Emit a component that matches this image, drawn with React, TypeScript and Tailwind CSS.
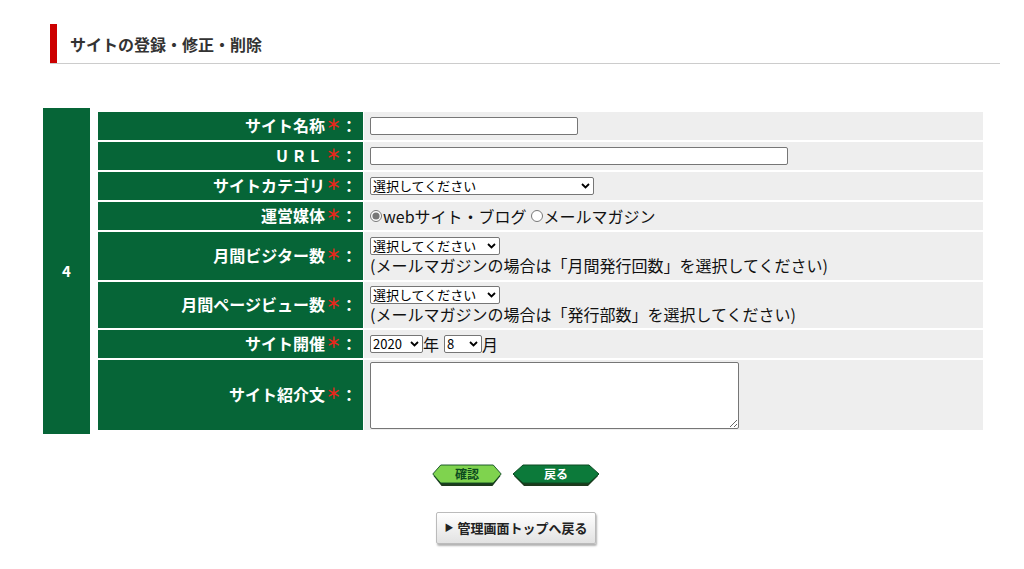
const jp = '[font-family:"Noto_Sans_CJK_JP","Noto_Sans",sans-serif]';

function Label({ children, wide }: { children: React.ReactNode; wide?: boolean }) {
    return (
        <div
            className={`flex w-[265px] shrink-0 items-center justify-end bg-[#066537] pb-[3px] pr-[6px] text-[16px] font-bold text-white ${wide ? 'tracking-[0.35em]' : ''}`}
        >
            {children}
            <span className="ml-[1px] text-[15px] tracking-normal text-[#e8261c]">＊</span>
            <span className="tracking-normal">：</span>
        </div>
    );
}

function Row({ label, children, h, wide }: { label: string; children: React.ReactNode; h: string; wide?: boolean }) {
    return (
        <div className={`flex gap-[1px] ${h}`}>
            <Label wide={wide}>{label}</Label>
            <div className="flex flex-1 flex-col justify-center bg-[#eeeeee] pl-[6px] text-[16px] leading-[20px] text-[#111]">
                {children}
            </div>
        </div>
    );
}

function Sel({ w, children }: { w: string; children: React.ReactNode }) {
    return (
        <span className={`relative inline-flex ${w}`}>
            <select
                className="h-[18px] w-full appearance-none rounded-[2px] border border-[#767676] bg-white py-0 pl-[2px] pr-[14px] text-[13px] leading-[16px] text-black"
                defaultValue=""
            >
                {children}
            </select>
            <svg
                className="pointer-events-none absolute right-[4px] top-[6px] h-[6px] w-[9px]"
                viewBox="0 0 9 6"
            >
                <path d="M1 1l3.5 3.5L8 1" fill="none" stroke="#000" strokeWidth="1.8" />
            </svg>
        </span>
    );
}

function HexButton({ text, fill, textColor, w }: { text: string; fill: string; textColor: string; w: string }) {
    return (
        <div className={`relative flex h-[22px] items-center justify-center ${w}`}>
            <svg className="absolute inset-0 h-full w-full" viewBox="0 0 88 22" preserveAspectRatio="none">
                <polygon points="2,12 12,2 76,2 86,12 76,22 12,22" fill="#1d3a1d" />
                <polygon points="1,10 11,1 77,1 87,10 77,19 11,19" fill={fill} stroke="#0d4a22" strokeWidth="1" />
            </svg>
            <span className="relative -mt-[2px] text-[12px] font-bold" style={{ color: textColor }}>
                {text}
            </span>
        </div>
    );
}

export default function App() {
    return (
        <div className={`min-h-[569px] w-[1024px] bg-white ${jp}`}>
            <div className="ml-[50px] mr-[24px] pt-[24px]">
                <div className="flex h-[40px] items-center border-b border-[#cccccc]">
                    <div className="h-full w-[7px] bg-[#cc0000]" />
                    <h1 className="ml-[13px] text-[16px] font-bold text-[#333]">サイトの登録・修正・削除</h1>
                </div>
            </div>

            <div className="ml-[43px] mt-[44px] flex w-[940px] gap-[8px]">
                <div className="flex w-[47px] shrink-0 items-center justify-center bg-[#066537] text-[15px] font-bold text-white">
                    4
                </div>
                <div className="flex flex-1 flex-col gap-[2px] py-[4px]">
                    <Row label="サイト名称" h="h-[28px]">
                        <input className="h-[18px] w-[208px] rounded-[2px] border border-[#767676] bg-white" />
                    </Row>
                    <Row label="URL" h="h-[28px]" wide>
                        <input className="h-[18px] w-[418px] rounded-[2px] border border-[#767676] bg-white" />
                    </Row>
                    <Row label="サイトカテゴリ" h="h-[28px]">
                        <div className="flex">
                            <Sel w="w-[224px]">
                                <option value="">選択してください</option>
                            </Sel>
                        </div>
                    </Row>
                    <Row label="運営媒体" h="h-[28px]">
                        <div className="flex items-center">
                            <input type="radio" name="m" defaultChecked className="m-0 h-[12px] w-[12px] accent-[#777]" />
                            <span className="ml-[1px]">webサイト・ブログ</span>
                            <input type="radio" name="m" className="m-0 ml-[4px] h-[12px] w-[12px]" />
                            <span className="ml-[1px]">メールマガジン</span>
                        </div>
                    </Row>
                    <Row label="月間ビジター数" h="h-[48px]">
                        <div className="flex">
                            <Sel w="w-[130px]">
                                <option value="">選択してください</option>
                            </Sel>
                        </div>
                        <div>(メールマガジンの場合は「月間発行回数」を選択してください)</div>
                    </Row>
                    <Row label="月間ページビュー数" h="h-[46px]">
                        <div className="flex">
                            <Sel w="w-[130px]">
                                <option value="">選択してください</option>
                            </Sel>
                        </div>
                        <div>(メールマガジンの場合は「発行部数」を選択してください)</div>
                    </Row>
                    <Row label="サイト開催" h="h-[28px]">
                        <div className="flex items-center">
                            <Sel w="w-[53px]">
                                <option value="">2020</option>
                            </Sel>
                            <span>年</span>
                            <span className="ml-[5px] flex">
                                <Sel w="w-[38px]">
                                    <option value="">8</option>
                                </Sel>
                            </span>
                            <span>月</span>
                        </div>
                    </Row>
                    <Row label="サイト紹介文" h="h-[70px]">
                        <textarea className="h-[67px] w-[369px] resize rounded-[2px] border border-[#767676] bg-white" />
                    </Row>
                </div>
            </div>

            <div className="mt-[30px] flex justify-center gap-[10px] pl-[8px]">
                <HexButton text="確認" fill="#7fd34e" textColor="#0b4a1e" w="w-[70px]" />
                <HexButton text="戻る" fill="#0c7a3a" textColor="#ffffff" w="w-[88px]" />
            </div>

            <div className="mt-[26px] flex justify-center pl-[8px]">
                <button className="flex h-[32px] w-[160px] items-center justify-center gap-[4px] rounded-[2px] border border-[#bbbbbb] bg-[linear-gradient(#ffffff,#e2e2e2)] text-[13px] font-bold text-[#222] shadow-[1px_2px_2px_rgba(0,0,0,0.3)]">
                    <span className="text-[9px]">▶</span>管理画面トップへ戻る
                </button>
            </div>
        </div>
    );
}
